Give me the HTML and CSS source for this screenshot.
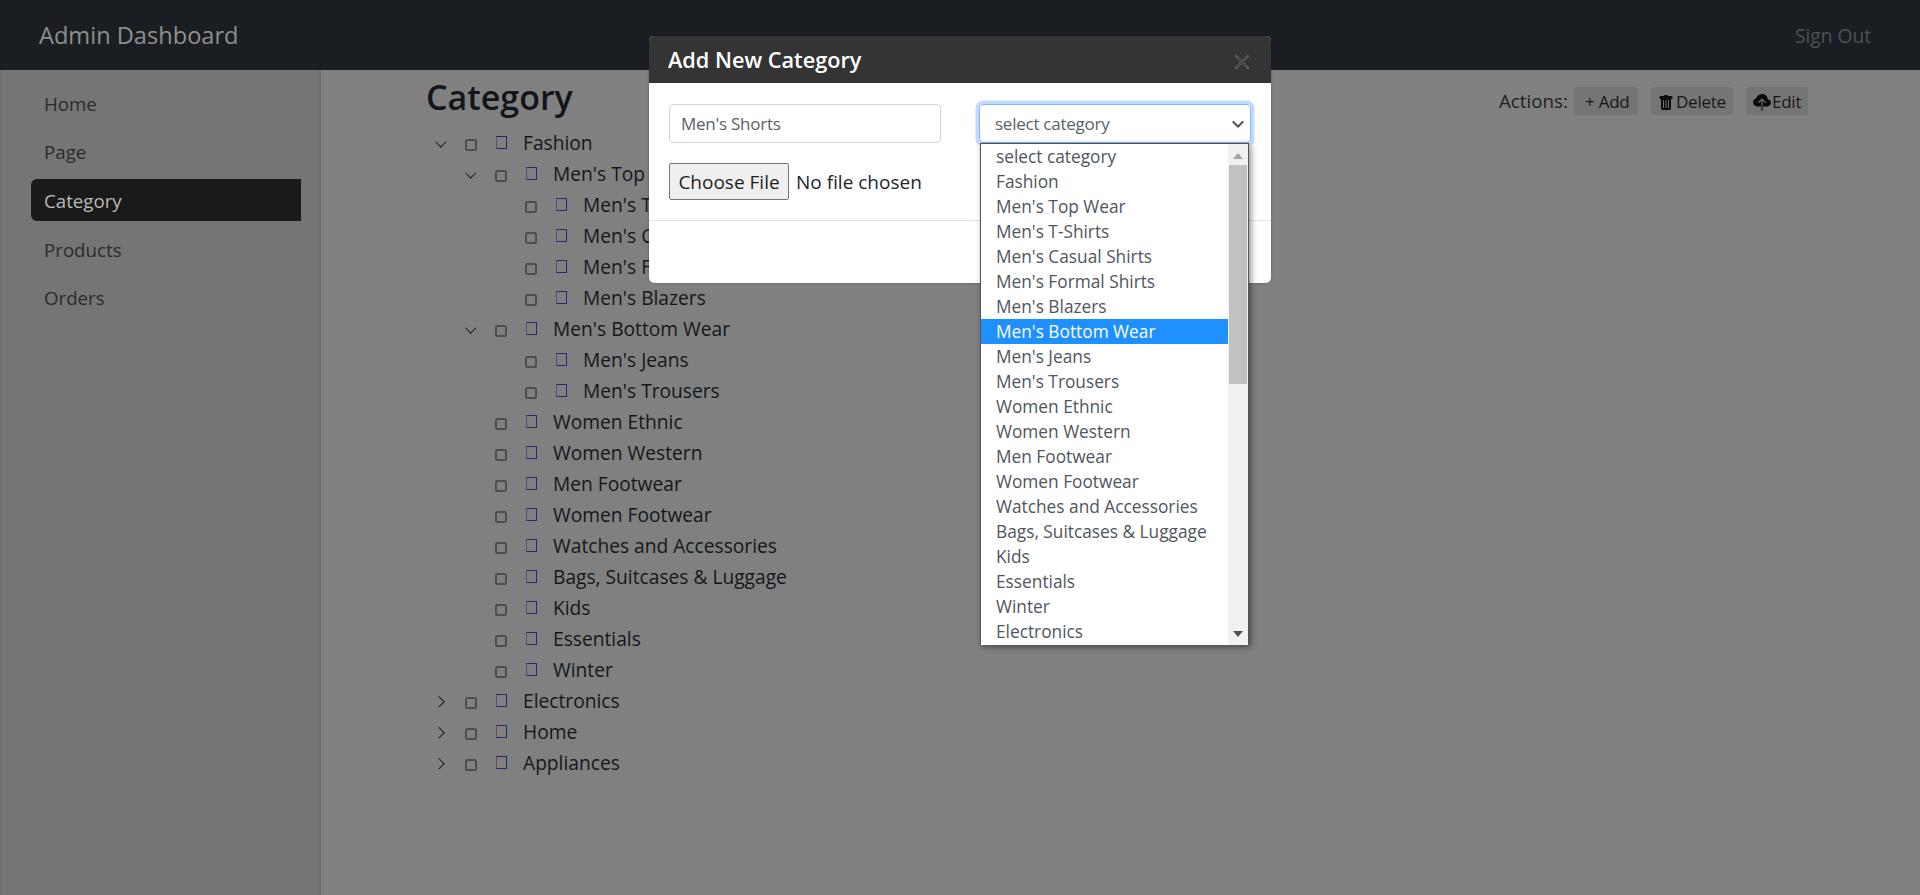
FILE: index.html
```html
<!DOCTYPE html>
<html lang="en">
<head>
<meta charset="utf-8">
<title>Admin Dashboard</title>
<link rel="stylesheet" href="styles.css">
</head>
<body>
<header class="topbar">
  <a class="brand">Admin Dashboard</a>
  <a class="signout">Sign Out</a>
</header>
<div class="layout">
  <nav class="sidebar">
    <a class="nav-item">Home</a>
    <a class="nav-item">Page</a>
    <a class="nav-item active">Category</a>
    <a class="nav-item">Products</a>
    <a class="nav-item">Orders</a>
  </nav>
  <main class="content">
    <div class="head-row">
      <h1 class="title">Category</h1>
      <div class="actions">
        <span class="actions-label">Actions:</span>
        <button class="act act-add">+ Add</button>
        <button class="act act-del"><svg class="ico-trash" viewBox="0 0 16 16"><path d="M2.5 1a1 1 0 0 0-1 1v1a1 1 0 0 0 1 1H3v9a2 2 0 0 0 2 2h6a2 2 0 0 0 2-2V4h.5a1 1 0 0 0 1-1V2a1 1 0 0 0-1-1H10a1 1 0 0 0-1-1H7a1 1 0 0 0-1 1H2.5zm3 4a.5.5 0 0 1 .5.5v7a.5.5 0 0 1-1 0v-7a.5.5 0 0 1 .5-.5zM8 5a.5.5 0 0 1 .5.5v7a.5.5 0 0 1-1 0v-7A.5.5 0 0 1 8 5zm3 .5v7a.5.5 0 0 1-1 0v-7a.5.5 0 0 1 1 0z"/></svg>Delete</button>
        <button class="act act-edit"><svg class="ico-cloud" viewBox="0 0 16 16"><path fill-rule="evenodd" d="M8 0a5.53 5.53 0 0 0-3.594 1.342c-.766.66-1.321 1.52-1.464 2.383C1.266 4.095 0 5.555 0 7.318 0 9.366 1.708 11 3.781 11H7.5V5.707L5.354 7.854a.5.5 0 1 1-.708-.708l3-3a.5.5 0 0 1 .708 0l3 3a.5.5 0 0 1-.708.708L8.5 5.707V11h4.188C14.502 11 16 9.57 16 7.773c0-1.636-1.242-2.969-2.834-3.194C12.923 1.999 10.69 0 8 0zm-.5 14.5V11h1v3.5a.5.5 0 0 1-1 0z"/></svg>Edit</button>
      </div>
    </div>
    <ul class="tree">
      <li><div class="row"><span class="chev down"></span><span class="check"></span><span class="tofu"></span><span class="label">Fashion</span></div>
        <ul>
          <li><div class="row"><span class="chev down"></span><span class="check"></span><span class="tofu"></span><span class="label">Men's Top Wear</span></div>
            <ul>
              <li><div class="row"><span class="chev"></span><span class="check"></span><span class="tofu"></span><span class="label">Men's T-Shirts</span></div></li>
              <li><div class="row"><span class="chev"></span><span class="check"></span><span class="tofu"></span><span class="label">Men's Casual Shirts</span></div></li>
              <li><div class="row"><span class="chev"></span><span class="check"></span><span class="tofu"></span><span class="label">Men's Formal Shirts</span></div></li>
              <li><div class="row"><span class="chev"></span><span class="check"></span><span class="tofu"></span><span class="label">Men's Blazers</span></div></li>
            </ul>
          </li>
          <li><div class="row"><span class="chev down"></span><span class="check"></span><span class="tofu"></span><span class="label">Men's Bottom Wear</span></div>
            <ul>
              <li><div class="row"><span class="chev"></span><span class="check"></span><span class="tofu"></span><span class="label">Men's Jeans</span></div></li>
              <li><div class="row"><span class="chev"></span><span class="check"></span><span class="tofu"></span><span class="label">Men's Trousers</span></div></li>
            </ul>
          </li>
          <li><div class="row"><span class="chev"></span><span class="check"></span><span class="tofu"></span><span class="label">Women Ethnic</span></div></li>
          <li><div class="row"><span class="chev"></span><span class="check"></span><span class="tofu"></span><span class="label">Women Western</span></div></li>
          <li><div class="row"><span class="chev"></span><span class="check"></span><span class="tofu"></span><span class="label">Men Footwear</span></div></li>
          <li><div class="row"><span class="chev"></span><span class="check"></span><span class="tofu"></span><span class="label">Women Footwear</span></div></li>
          <li><div class="row"><span class="chev"></span><span class="check"></span><span class="tofu"></span><span class="label">Watches and Accessories</span></div></li>
          <li><div class="row"><span class="chev"></span><span class="check"></span><span class="tofu"></span><span class="label">Bags, Suitcases &amp; Luggage</span></div></li>
          <li><div class="row"><span class="chev"></span><span class="check"></span><span class="tofu"></span><span class="label">Kids</span></div></li>
          <li><div class="row"><span class="chev"></span><span class="check"></span><span class="tofu"></span><span class="label">Essentials</span></div></li>
          <li><div class="row"><span class="chev"></span><span class="check"></span><span class="tofu"></span><span class="label">Winter</span></div></li>
        </ul>
      </li>
      <li><div class="row"><span class="chev right"></span><span class="check"></span><span class="tofu"></span><span class="label">Electronics</span></div></li>
      <li><div class="row"><span class="chev right"></span><span class="check"></span><span class="tofu"></span><span class="label">Home</span></div></li>
      <li><div class="row"><span class="chev right"></span><span class="check"></span><span class="tofu"></span><span class="label">Appliances</span></div></li>
    </ul>
  </main>
</div>

<section class="modal">
  <div class="modal-head">
    <h2 class="modal-title">Add New Category</h2>
    <svg class="modal-close" viewBox="0 0 16 16"><path class="x-halo" d="M1.5 1.5l13 13M14.5 1.5l-13 13"/><path class="x-core" d="M2.5 2.5l11 11M13.5 2.5l-11 11"/></svg>
  </div>
  <div class="modal-body">
    <div class="form-row">
      <div class="field">Men's Shorts</div>
      <div class="field select-field">select category<svg class="select-chev" viewBox="0 0 16 16"><path d="M2 5l6 6 6-6"/></svg></div>
    </div>
    <div class="file-row"><button class="file-btn">Choose File</button><span class="file-name">No file chosen</span></div>
  </div>
  <div class="modal-foot"></div>
</section>

<div class="dropdown">
  <ul class="options">
    <li>select category</li>
    <li>Fashion</li>
    <li>Men's Top Wear</li>
    <li>Men's T-Shirts</li>
    <li>Men's Casual Shirts</li>
    <li>Men's Formal Shirts</li>
    <li>Men's Blazers</li>
    <li class="selected">Men's Bottom Wear</li>
    <li>Men's Jeans</li>
    <li>Men's Trousers</li>
    <li>Women Ethnic</li>
    <li>Women Western</li>
    <li>Men Footwear</li>
    <li>Women Footwear</li>
    <li>Watches and Accessories</li>
    <li>Bags, Suitcases &amp; Luggage</li>
    <li>Kids</li>
    <li>Essentials</li>
    <li>Winter</li>
    <li>Electronics</li>
  </ul>
  <div class="scrollbar">
    <span class="arrow up"></span>
    <span class="thumb"></span>
    <span class="arrow dn"></span>
  </div>
</div>
</body>
</html>
```
FILE: styles.css
```css
* { box-sizing: border-box; }
html, body { height: 100%; }
body {
  margin: 0;
  height: 895px;
  overflow: hidden;
  background: #808080;
  font-family: "Open Sans", "Noto Sans", sans-serif;
  font-size: 17px;
  color: #15171a;
  display: flex;
  flex-direction: column;
}
.topbar {
  height: 70px;
  flex: none;
  background: #1a1e22;
  display: flex;
  align-items: center;
  justify-content: space-between;
  padding: 0 49px 0 39px;
}
.brand { font-size: 23.6px; color: #8f8f8f; }
.signout { font-size: 19.2px; color: #4f5154; }
.layout { flex: 1; display: flex; min-height: 0; }
.sidebar {
  width: 321px;
  flex: none;
  background: #757575;
  border-left: 1px solid #6b6b6b;
  border-right: 2px solid #6c6c6c;
  padding: 12px 18px 0 30px;
  display: flex;
  flex-direction: column;
  gap: 6.7px;
}
.nav-item {
  height: 42px;
  display: flex;
  align-items: center;
  padding: 0 0 0 13px;
  color: #2b2b2b;
  font-size: 18.7px;
  border-radius: 6px 0 0 6px;
}
.nav-item.active { background: #1a1a1a; color: #b9b9b9; }
.content { flex: 1; padding-left: 105px; padding-right: 112px; }
.head-row {
  height: 57px;
  display: flex;
  justify-content: space-between;
}
.title { margin: 7px 0 0; font-size: 34px; font-weight: 600; line-height: 40px; color: #13151a; }
.actions { display: flex; align-items: center; height: 28px; margin-top: 17px; }
.actions-label { font-size: 18.8px; margin-right: 6px; color: #1e2024; }
.act {
  height: 28px;
  border: 0;
  padding: 0;
  margin-right: 13px;
  background: #757575;
  color: #15171a;
  font: inherit;
  letter-spacing: -0.25px;
  white-space: nowrap;
  display: flex;
  align-items: center;
  border-radius: 2px;
}
.act:last-child { margin-right: 0; }
.act-add { width: 64px; padding-left: 11px; }
.act-del { width: 82px; padding-left: 7px; }
.act-edit { width: 62px; padding-left: 7px; }
.ico-trash { width: 16px; height: 16px; margin: 4px 2px 0 0; fill: #0b0b0b; flex: none; }
.ico-cloud { width: 18px; height: 18px; margin-top: 4px; margin-right: 1px; fill: #0b0b0b; flex: none; }

.tree, .tree ul { list-style: none; margin: 0; padding: 0; }
.tree ul { padding-left: 30px; }
.row { height: 31px; line-height: 24px; display: flex; align-items: center; font-size: 19.2px; white-space: nowrap; }
.chev { width: 30px; height: 31px; flex: none; position: relative; }
.chev.down::after, .chev.right::after {
  content: "";
  position: absolute;
  left: 11px;
  top: 12px;
  width: 6.5px;
  height: 6.5px;
  border-right: 1.6px solid #1c1c1c;
  border-bottom: 1.6px solid #1c1c1c;
}
.chev.down::after { transform: rotate(45deg); top: 11px; }
.chev.right::after { transform: rotate(-45deg); left: 9px; top: 13px; }
.check {
  width: 12px;
  height: 12px;
  margin: 4px 9px 0 9px;
  flex: none;
  border: 2px solid #4d4d4d;
  border-radius: 2.5px;
}
.tofu {
  width: 11px;
  height: 13px;
  margin: 0 0 0 10px;
  flex: none;
  border: 1px solid #28286e;
  border-left-color: #644a70;
}
.label { margin-left: 16px; }

.modal {
  position: absolute;
  left: 649px;
  top: 36px;
  width: 622px;
  height: 247px;
  background: #fff;
  border-radius: 5px;
  overflow: hidden;
  box-shadow: 0 0 2px rgba(0,0,0,.4);
  display: flex;
  flex-direction: column;
}
.modal-head {
  height: 47px;
  flex: none;
  background: #343434;
  display: flex;
  align-items: center;
  justify-content: space-between;
  padding: 0 21px 0 19px;
}
.modal-title { margin: 0; color: #fff; font-size: 21.7px; font-weight: 600; }
.modal-close { width: 16px; height: 16px; margin-top: 5px; fill: none; }
.x-halo { stroke: #6f6f6f; stroke-width: 2; }
.x-core { stroke: #1f1f1f; stroke-width: 0.8; }
.modal-body { flex: none; height: 138px; padding: 21px 20px 0; border-bottom: 1px solid #dee2e6; }
.form-row { display: flex; gap: 38px; }
.field {
  width: 272px;
  height: 39px;
  border: 1px solid #ced4da;
  border-radius: 4px;
  padding-left: 11px;
  display: flex;
  align-items: center;
  font-size: 17px;
  letter-spacing: -0.25px;
  color: #595f66;
}
.select-field {
  position: relative;
  padding-left: 15px;
  border-color: #86b7fe;
  box-shadow: 0 0 0 3.5px #bfdcff;
}
.select-chev {
  position: absolute;
  right: 5px;
  top: 12px;
  width: 14px;
  height: 14px;
  fill: none;
  stroke: #454b52;
  stroke-width: 2.4;
}
.file-row { display: flex; align-items: center; margin-top: 20px; }
.file-btn {
  width: 120px;
  height: 37px;
  padding: 0;
  background: #efefef;
  border: 1px solid #767676;
  border-radius: 2px;
  font: inherit;
  font-size: 19px;
  color: #1e1e1e;
}
.file-name { margin-left: 7px; font-size: 19px; color: #212529; }
.modal-foot { flex: 1; }

.dropdown {
  position: absolute;
  left: 980px;
  top: 143px;
  width: 269px;
  height: 502px;
  background: #fff;
  border: 1px solid #555;
  border-width: 1px 1px 0 1px;
  box-shadow: 2px 2px 6px rgba(0,0,0,.45);
  display: flex;
}
.options { list-style: none; margin: 0; padding: 0; width: 247px; flex: none; }
.options li {
  height: 25px;
  line-height: 25px;
  padding-left: 15px;
  font-size: 17.3px;
  color: #50565d;
  white-space: nowrap;
}
.options li.selected { background: #1e90ff; color: #fff; }
.scrollbar {
  flex: 1;
  background: #f1f1f1;
  position: relative;
}
.thumb {
  position: absolute;
  left: 1px;
  right: 1px;
  top: 21px;
  height: 219px;
  background: #c1c1c1;
}
.arrow { position: absolute; left: 5px; width: 0; height: 0; border-left: 5px solid transparent; border-right: 5px solid transparent; }
.arrow.up { top: 9px; border-bottom: 6px solid #a3a3a3; }
.arrow.dn { bottom: 8px; border-top: 6px solid #505050; }
```
